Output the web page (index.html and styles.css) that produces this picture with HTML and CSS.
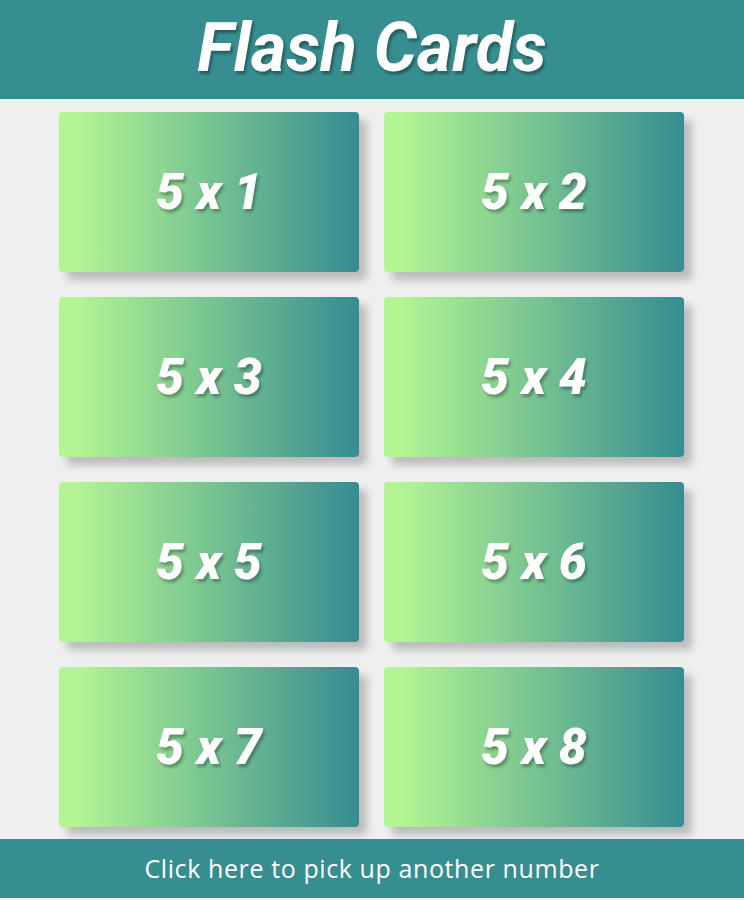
FILE: index.html
```html
<!DOCTYPE html>
<html>
<head>
<meta charset="utf-8">
<link rel="stylesheet" href="styles.css">
</head>
<body>
<header class="header"><h1 class="title">Flash Cards</h1></header>
<main class="grid">
  <div class="card">5 x 1</div>
  <div class="card">5 x 2</div>
  <div class="card">5 x 3</div>
  <div class="card">5 x 4</div>
  <div class="card">5 x 5</div>
  <div class="card">5 x 6</div>
  <div class="card">5 x 7</div>
  <div class="card">5 x 8</div>
</main>
<footer class="footer">Click here to pick up another number</footer>
</body>
</html>
```
FILE: styles.css
```css
html, body { margin: 0; padding: 0; }
body { background: #efefef; font-family: Roboto, "Liberation Sans", sans-serif; height: 900px; overflow: hidden; }
.header { background: #378e90; height: 99px; display: flex; align-items: center; justify-content: center; }
.title { margin: 0; color: #fff; font-family: Roboto, sans-serif; font-weight: 700; font-style: italic; font-size: 68px; text-shadow: 2px 3px 3px rgba(0,0,0,0.35); line-height: 1; position: relative; top: -2px; }
.grid { width: 625px; margin: 13px 0 12px 59px; display: grid; grid-template-columns: 300px 300px; gap: 25px; }
.card { height: 160px; border-radius: 4px; background: linear-gradient(to right, #b2f592 6%, #368c91 100%); box-shadow: 8px 8px 8px rgba(0,0,0,0.22); display: flex; align-items: center; justify-content: center; color: #fff; font-weight: 900; font-style: italic; font-size: 50px; text-shadow: 2px 3px 3px rgba(0,0,0,0.3); }
.footer { background: #378e90; height: 59px; display: flex; align-items: center; justify-content: center; color: #fff; font-family: "Open Sans", sans-serif; font-size: 25px; letter-spacing: 0.6px; padding-bottom: 2px; box-sizing: border-box; }
```
